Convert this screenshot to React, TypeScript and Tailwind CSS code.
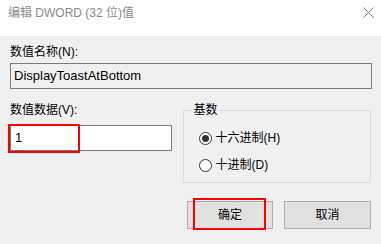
import React from "react";

const font = { fontFamily: '"Liberation Sans", "Noto Sans CJK SC", sans-serif' };

function Radio({ checked, label }: { checked?: boolean; label: string }) {
  return (
    <div className="flex items-center h-[16px]">
      <span className="w-[13px] h-[13px] rounded-full border border-[#333] bg-white flex items-center justify-center">
        {checked && <span className="w-[7px] h-[7px] rounded-full bg-[#333]" />}
      </span>
      <span className="ml-[4px] text-[12px] leading-[16px] text-black">{label}</span>
    </div>
  );
}

export default function App() {
  return (
    <div className="w-[381px] h-[244px] bg-[#f0f0f0] flex flex-col overflow-hidden" style={font}>
      {/* Title bar */}
      <div className="h-[36px] bg-white flex items-start justify-between pl-[8px] pr-[7px] pt-[5px]">
        <span className="text-[12px] leading-[16px] text-[#8a8a8a]">编辑 DWORD (32 位)值</span>
        <svg width="11" height="11" viewBox="0 0 11 11" className="mt-[2px]">
          <path d="M0.5 0.5 L10.5 10.5 M10.5 0.5 L0.5 10.5" stroke="#7a7a7a" strokeWidth="1" fill="none" />
        </svg>
      </div>

      <div className="flex flex-col px-[10px]">
        <div className="mt-[8px] text-[12px] leading-[16px] text-black">数值名称(N):</div>
        <div className="mt-[3px] h-[26px] w-[362px] border border-[#7a7a7a] bg-[#f0f0f0] flex items-center px-[3px] text-[13px] text-black">
          DisplayToastAtBottom
        </div>

        <div className="mt-[13px] flex">
          {/* Value data */}
          <div className="w-[162px] flex flex-col">
            <div className="text-[12px] leading-[16px] text-black">数值数据(V):</div>
            <div className="relative mt-[7px] h-[26px] border border-[#7a7a7a] bg-white flex items-center px-[4px] text-[13px] text-black">
              1
              <div className="absolute -left-[3px] -top-[2px] w-[72px] h-[29px] border-2 border-[#ff0000]" />
            </div>
          </div>

          {/* Base group */}
          <div className="relative ml-[11px] mt-[8px] w-[189px] h-[73px] border border-[#dcdcdc] flex flex-col pl-[15px] pt-[19px] gap-[11px]">
            <span className="absolute -top-[9px] left-[8px] bg-[#f0f0f0] px-[2px] text-[12px] leading-[16px] text-black">
              基数
            </span>
            <Radio checked label="十六进制(H)" />
            <Radio label="十进制(D)" />
          </div>
        </div>

        {/* Buttons */}
        <div className="mt-[18px] flex justify-end gap-[11px]">
          <div className="relative w-[86px] h-[28px] bg-[#e1e1e1] border border-[#adadad] flex items-center justify-center text-[12px] text-black">
            确定
            <div className="absolute left-[5px] -top-[4px] w-[73px] h-[32px] border-2 border-[#ff0000]" />
          </div>
          <div className="w-[87px] h-[28px] bg-[#e1e1e1] border border-[#adadad] flex items-center justify-center text-[12px] text-black">
            取消
          </div>
        </div>
      </div>
    </div>
  );
}
